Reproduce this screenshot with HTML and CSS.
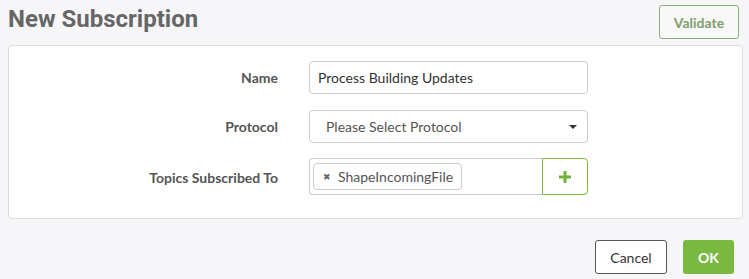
FILE: index.html
```html
<!DOCTYPE html>
<html lang="en">
<head>
    <meta charset="UTF-8">
    <title>New Subscription</title>
    <link rel="stylesheet" href="styles.css">
</head>
<body>
    <div class="header">
        <div class="title">New Subscription</div>
        <button class="btn btn-validate">Validate</button>
    </div>
    <div class="panel">
        <form class="form">
            <label class="form-label" for="name">Name</label>
            <input class="form-input" type="text" id="name" value="Process Building Updates">

            <label class="form-label" for="protocol">Protocol</label>
            <div class="form-select" id="protocol">
                <span>Please Select Protocol</span>
                <span class="caret"></span>
            </div>

            <label class="form-label">Topics Subscribed To</label>
            <div class="topics">
                <div class="topics-field">
                    <span class="tag"><span class="tag-x">&#10006;</span>ShapeIncomingFile</span>
                </div>
                <button class="topics-add" type="button">
                    <svg width="12" height="12" viewBox="0 0 12 12"><path d="M4.5 0h3v4.5H12v3H7.5V12h-3V7.5H0v-3h4.5z" fill="#6fb33d"/></svg>
                </button>
            </div>
        </form>
    </div>
    <div class="footer">
        <button class="btn btn-cancel">Cancel</button>
        <button class="btn btn-ok">OK</button>
    </div>
</body>
</html>
```

FILE: styles.css
```css
body {
    margin: 0;
    padding: 0 6px 0 8px;
    background-color: #f6f6f8;
    font-family: Lato, "Liberation Sans", sans-serif;
    color: #333;
}

.header {
    display: flex;
    justify-content: space-between;
    align-items: flex-start;
    height: 45px;
}

.title {
    font-family: Roboto, "Liberation Sans", sans-serif;
    font-weight: bold;
    font-size: 24px;
    color: #666;
    margin-top: 5px;
}

.btn {
    font-family: Lato, "Liberation Sans", sans-serif;
    font-size: 14px;
    border-radius: 3px;
    cursor: pointer;
    height: 34px;
    box-sizing: border-box;
}

.btn-validate {
    margin-top: 5px;
    margin-right: 4px;
    width: 80px;
    background-color: #f8f8f8;
    border: 1px solid #8fad7c;
    color: #7f9e6c;
    font-weight: bold;
}

.panel {
    background-color: #fff;
    border: 1px solid #dcdcdc;
    border-radius: 4px;
    padding: 15px 0 23px 0;
}

.form {
    display: grid;
    grid-template-columns: 269px 279px;
    column-gap: 31px;
    row-gap: 16px;
    align-items: center;
}

.form-label {
    text-align: right;
    font-weight: bold;
    font-size: 14px;
    color: #555;
}

.form-input, .form-select {
    height: 33px;
    box-sizing: border-box;
    border: 1px solid #ccc;
    border-radius: 4px;
    font-family: Lato, "Liberation Sans", sans-serif;
    font-size: 14px;
    color: #333;
    padding: 0 8px;
    width: 100%;
}

.form-select {
    display: flex;
    align-items: center;
    justify-content: space-between;
    padding: 0 10px 0 16px;
    color: #555;
}

.caret {
    width: 0;
    height: 0;
    border-left: 4px solid transparent;
    border-right: 4px solid transparent;
    border-top: 4px solid #333;
}

.topics {
    display: flex;
    height: 37px;
    margin-top: -1px;
}

.topics-field {
    flex: 1;
    border: 1px solid #ccc;
    border-right: none;
    border-radius: 4px 0 0 4px;
    padding: 3px 3px;
    display: flex;
    align-items: center;
}

.tag {
    display: inline-flex;
    align-items: center;
    height: 27px;
    box-sizing: border-box;
    border: 1px solid #ccc;
    border-radius: 4px;
    padding: 0 8px 0 9px;
    font-size: 14px;
    color: #555;
}

.tag-x {
    font-size: 9px;
    color: #666;
    margin-right: 7px;
}

.topics-add {
    width: 46px;
    background-color: #fff;
    border: 1px solid #7ab842;
    border-radius: 0 4px 4px 0;
    display: flex;
    align-items: center;
    justify-content: center;
    cursor: pointer;
}

.footer {
    display: flex;
    justify-content: flex-end;
    gap: 16px;
    margin-top: 21px;
    padding-right: 9px;
}

.btn-cancel {
    width: 72px;
    background-color: #fff;
    border: 1px solid #555;
    color: #333;
}

.btn-ok {
    width: 51px;
    background-color: #7ab842;
    border: none;
    color: #fff;
    font-weight: bold;
}
```
